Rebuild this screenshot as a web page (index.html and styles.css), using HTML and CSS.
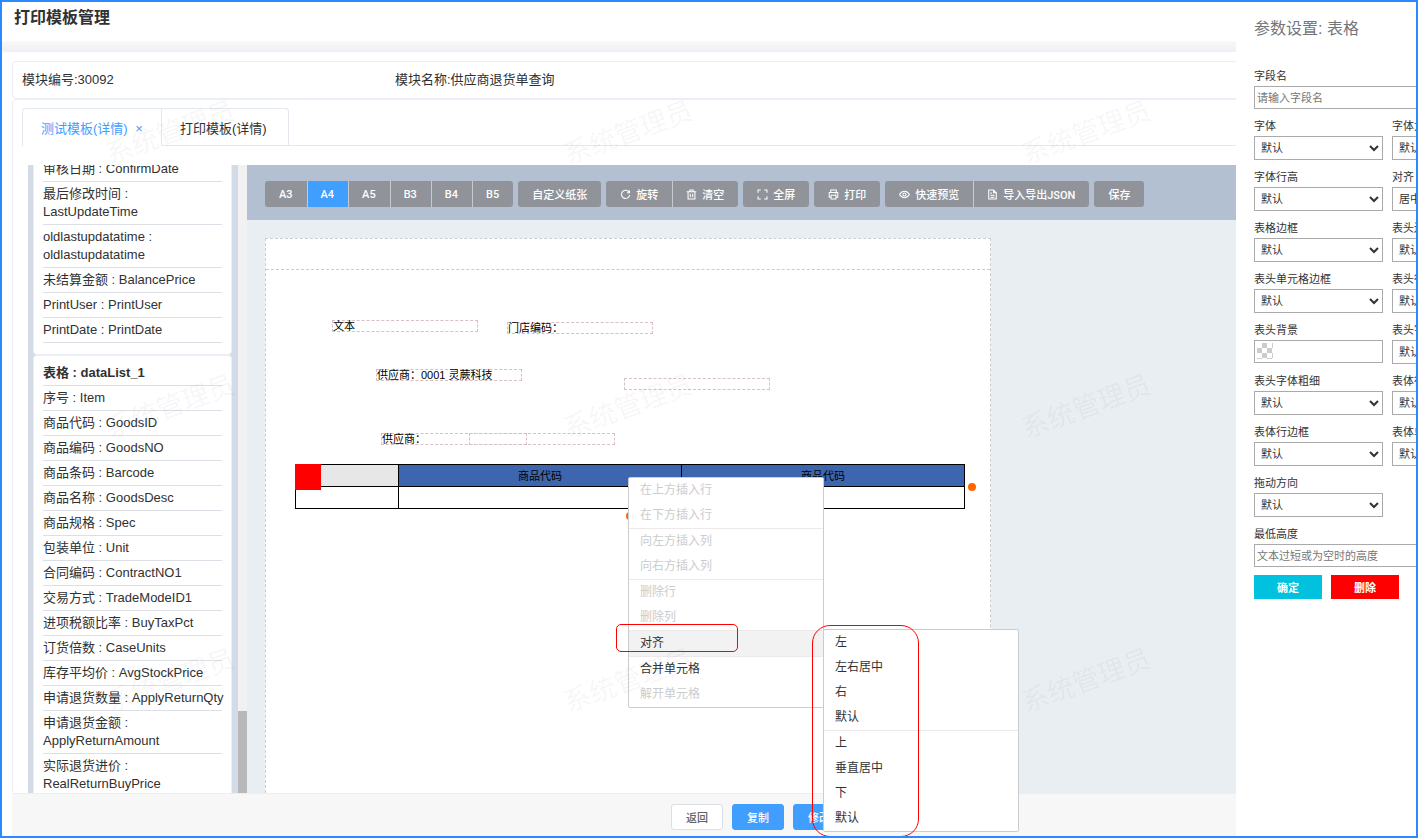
FILE: index.html
```html
<!DOCTYPE html>
<html lang="zh-CN">
<head>
    <meta charset="UTF-8">
    <meta name="viewport" content="width=device-width, initial-scale=1.0">
    <title>打印模板管理</title>
    <link rel="stylesheet" href="styles.css">
</head>
<body>

    <div class="page">
        <header class="page-header">
            <h1>打印模板管理</h1>
        </header>
        <div class="page-shadow"></div>

        <main class="card">
            <div class="info">
                <span>模块编号:30092</span>
                <span>模块名称:供应商退货单查询</span>
            </div>

            <div class="workspace">
                <nav class="tabs">
                    <button type="button" class="tab active">测试模板(详情) <span class="close">×</span></button>
                    <button type="button" class="tab">打印模板(详情)</button>
                </nav>

                <div class="designer">
                    <aside class="fields">
                        <div class="field-list">
                            <ul class="field-group">
                                <li>审核日期 : ConfirmDate</li>
                                <li>最后修改时间 :<br>LastUpdateTime</li>
                                <li>oldlastupdatatime :<br>oldlastupdatatime</li>
                                <li>未结算金额 : BalancePrice</li>
                                <li>PrintUser : PrintUser</li>
                                <li>PrintDate : PrintDate</li>
                            </ul>
                            <ul class="field-group last">
                                <li class="title">表格 : dataList_1</li>
                                <li>序号 : Item</li>
                                <li>商品代码 : GoodsID</li>
                                <li>商品编码 : GoodsNO</li>
                                <li>商品条码 : Barcode</li>
                                <li>商品名称 : GoodsDesc</li>
                                <li>商品规格 : Spec</li>
                                <li>包装单位 : Unit</li>
                                <li>合同编码 : ContractNO1</li>
                                <li>交易方式 : TradeModeID1</li>
                                <li>进项税额比率 : BuyTaxPct</li>
                                <li>订货倍数 : CaseUnits</li>
                                <li>库存平均价 : AvgStockPrice</li>
                                <li>申请退货数量 : ApplyReturnQty</li>
                                <li>申请退货金额 :<br>ApplyReturnAmount</li>
                                <li>实际退货进价 :<br>RealReturnBuyPrice</li>
                            </ul>
                        </div>
                        <div class="scrollbar"><div class="thumb"></div></div>
                    </aside>

                    <section class="editor">
                        <div class="toolbar">
                            <div class="btn-group">
                                <button type="button">A3</button>
                                <button type="button" class="active">A4</button>
                                <button type="button">A5</button>
                                <button type="button">B3</button>
                                <button type="button">B4</button>
                                <button type="button">B5</button>
                            </div>
                            <div class="btn-group">
                                <button type="button">自定义纸张</button>
                            </div>
                            <div class="btn-group">
                                <button type="button">
                                    <svg viewBox="0 0 16 16"><path d="M13.5 5.2A6 6 0 1 0 14 9M13.8 2v3.5h-3.5"/></svg>
                                    旋转
                                </button>
                                <button type="button">
                                    <svg viewBox="0 0 16 16"><path d="M1 4h14M5.5 4V1.5h5V4M3 4v10.5h10V4M6.3 7v5M9.7 7v5"/></svg>
                                    清空
                                </button>
                            </div>
                            <div class="btn-group">
                                <button type="button">
                                    <svg viewBox="0 0 16 16"><path d="M1.5 5.5v-4h4M10.5 1.5h4v4M14.5 10.5v4h-4M5.5 14.5h-4v-4"/></svg>
                                    全屏
                                </button>
                            </div>
                            <div class="btn-group">
                                <button type="button">
                                    <svg viewBox="0 0 16 16"><path d="M4 5V1.5h8V5M4 12H1.8V5h12.4v7H12M4.5 9h7v5.5h-7zM10.5 7h1.5"/></svg>
                                    打印
                                </button>
                            </div>
                            <div class="btn-group">
                                <button type="button">
                                    <svg viewBox="0 0 16 16"><path d="M.8 8C4.5 1.8 11.5 1.8 15.2 8 11.5 14.2 4.500 14.2.8 8z"/><circle cx="8" cy="8" r="2.3"/></svg>
                                    快速预览
                                </button>
                                <button type="button">
                                    <svg viewBox="0 0 16 16"><path d="M2.5 1.500h7l4 4v9h-11zM9.5 1.500v4h4M5 6h2M5 9h6M5 12h6"/></svg>
                                    导入导出JSON
                                </button>
                            </div>
                            <div class="btn-group">
                                <button type="button">保存</button>
                            </div>
                        </div>

                        <div class="canvas">
                            <div class="paper">
                                <div class="paper-head"></div>
                                <div class="item item-text">文本</div>
                                <div class="item item-store">门店编码：</div>
                                <div class="item item-supplier">供应商：0001 灵蕨科技</div>
                                <div class="item item-empty"></div>
                                <div class="item item-supplier2">供应商：</div>
                                <div class="item item-empty2"></div>

                                <div class="grid-item">
                                    <table>
                                        <colgroup><col class="col-first"><col><col></colgroup>
                                        <thead>
                                            <tr><th></th><th>商品代码</th><th>商品代码</th></tr>
                                        </thead>
                                        <tbody>
                                            <tr><td></td><td></td><td></td></tr>
                                        </tbody>
                                    </table>
                                    <span class="grip"></span>
                                    <span class="dot dot-right"></span>
                                    <span class="dot dot-bottom"></span>
                                </div>
                            </div>
                        </div>
                    </section>
                </div>
            </div>

            <footer class="actions">
                <button type="button">返回</button>
                <button type="button" class="primary">复制</button>
                <button type="button" class="primary">修改</button>
            </footer>
        </main>
    </div>

    <ul class="menu context-menu">
        <li class="disabled">在上方插入行</li>
        <li class="disabled">在下方插入行</li>
        <li class="disabled split">向左方插入列</li>
        <li class="disabled">向右方插入列</li>
        <li class="disabled split">删除行</li>
        <li class="disabled">删除列</li>
        <li class="split open">对齐
            <ul class="menu submenu">
                <li>左</li>
                <li>左右居中</li>
                <li>右</li>
                <li>默认</li>
                <li class="split">上</li>
                <li>垂直居中</li>
                <li>下</li>
                <li>默认</li>
            </ul>
        </li>
        <li class="split">合并单元格</li>
        <li class="disabled">解开单元格</li>
    </ul>

    <div class="watermark">
        <span>系统管理员</span><span>系统管理员</span><span>系统管理员</span>
        <span>系统管理员</span><span>系统管理员</span><span>系统管理员</span>
        <span>系统管理员</span><span>系统管理员</span><span>系统管理员</span>
    </div>

    <div class="mark mark-align"></div>
    <div class="mark mark-options"></div>

    <aside class="drawer">
        <h2>参数设置: 表格</h2>
        <form class="settings">
            <div class="row wide">
                <label for="fieldName">字段名</label>
                <input type="text" id="fieldName" placeholder="请输入字段名">
            </div>
            <div class="row">
                <label for="fontFamily">字体</label>
                <select id="fontFamily"><option>默认</option></select>
            </div>
            <div class="row">
                <label for="fontSize">字体大小</label>
                <select id="fontSize"><option>默认</option></select>
            </div>
            <div class="row">
                <label for="lineHeight">字体行高</label>
                <select id="lineHeight"><option>默认</option></select>
            </div>
            <div class="row">
                <label for="textAlign">对齐</label>
                <select id="textAlign"><option>居中</option></select>
            </div>
            <div class="row">
                <label for="tableBorder">表格边框</label>
                <select id="tableBorder"><option>默认</option></select>
            </div>
            <div class="row">
                <label for="headBorder">表头边框</label>
                <select id="headBorder"><option>默认</option></select>
            </div>
            <div class="row">
                <label for="headCellBorder">表头单元格边框</label>
                <select id="headCellBorder"><option>默认</option></select>
            </div>
            <div class="row">
                <label for="headRowHeight">表头行高</label>
                <select id="headRowHeight"><option>默认</option></select>
            </div>
            <div class="row">
                <label for="headBackground">表头背景</label>
                <input type="text" id="headBackground" class="color">
            </div>
            <div class="row">
                <label for="headFontSize">表头字体大小</label>
                <select id="headFontSize"><option>默认</option></select>
            </div>
            <div class="row">
                <label for="headFontWeight">表头字体粗细</label>
                <select id="headFontWeight"><option>默认</option></select>
            </div>
            <div class="row">
                <label for="bodyRowHeight">表体行高</label>
                <select id="bodyRowHeight"><option>默认</option></select>
            </div>
            <div class="row">
                <label for="bodyRowBorder">表体行边框</label>
                <select id="bodyRowBorder"><option>默认</option></select>
            </div>
            <div class="row">
                <label for="bodyCellBorder">表体单元格边框</label>
                <select id="bodyCellBorder"><option>默认</option></select>
            </div>
            <div class="row wide">
                <label for="axis">拖动方向</label>
                <select id="axis" class="half"><option>默认</option></select>
            </div>
            <div class="row wide">
                <label for="minHeight">最低高度</label>
                <input type="text" id="minHeight" placeholder="文本过短或为空时的高度">
            </div>
            <div class="buttons">
                <button type="button" class="ok">确定</button>
                <button type="button" class="delete">删除</button>
            </div>
        </form>
    </aside>

</body>
</html>
```

FILE: styles.css
```css
* {
    box-sizing: border-box;
}

body {
    position: relative;
    margin: 0;
    height: 100vh;
    border: 2px solid #2b8aff;
    overflow: hidden;
    background-color: #fff;
    color: #303133;
    font-family: "Liberation Sans", "Noto Sans CJK SC", sans-serif;
    font-size: 13px;
}

ul {
    list-style: none;
    margin: 0;
    padding: 0;
}

button,
input,
select {
    font-family: inherit;
    font-size: 11px;
    margin: 0;
}

button {
    cursor: pointer;
}

/* the page is wider than the window, its right end runs under the drawer */
.page {
    display: flex;
    flex-direction: column;
    width: calc(100% + 98px);
    height: 100%;
}

.page-header {
    padding: 4px 12px 11px;
}

.page-header h1 {
    margin: 0;
    font-size: 16px;
    line-height: 24px;
}

.page-shadow {
    height: 10px;
    background: linear-gradient(#f7f8f9, #eff1f4);
}

.card {
    display: flex;
    flex-direction: column;
    flex: 1;
    min-height: 0;
    padding: 9px 10px 0;
    border-top: 1px solid #ebeef5;
    border-radius: 4px 0 0 0;
}

.info {
    display: grid;
    grid-template-columns: repeat(4, 1fr);
    column-gap: 20px;
    padding: 8px 9px;
    border: 1px solid #ebeef5;
    border-radius: 4px;
    line-height: 20px;
}

.workspace {
    display: flex;
    flex-direction: column;
    flex: 1;
    min-height: 0;
    padding: 8px 0 0 9px;
    border: 1px solid #ebeef5;
    border-radius: 4px 4px 0 0;
}

.tabs {
    display: flex;
    border-bottom: 1px solid #e4e7ed;
}

.tab {
    height: 37px;
    min-width: 128px;
    padding: 0 18px;
    border: 1px solid #e4e7ed;
    border-bottom: none;
    border-radius: 0 4px 0 0;
    background-color: #fff;
    color: #303133;
    font-size: 13px;
    text-align: left;
}

.tab.active {
    height: 38px;
    margin-bottom: -1px;
    border-right: none;
    border-radius: 4px 0 0 0;
    color: #409eff;
}

.tab .close {
    margin-left: 4px;
}

.designer {
    display: flex;
    flex: 1;
    min-height: 0;
    margin: 19px 0 0 6px;
}

.fields {
    display: flex;
    width: 219px;
}

.field-list {
    display: flex;
    flex: 1;
    flex-direction: column;
    justify-content: flex-end;
    overflow: hidden;
    padding: 0 6px 0 5px;
    background-color: #d3dce6;
}

.field-group {
    padding: 5px 9px 11px;
    border: 1px solid #ebeef5;
    border-radius: 4px;
    background-color: #fff;
}

.field-group.last {
    margin-bottom: -4px;
    padding-bottom: 0;
    border-bottom: none;
}

.field-group li {
    padding: 3px 0;
    border-bottom: 1px solid #dcdfe6;
    line-height: 18px;
    white-space: nowrap;
}

.field-group .title {
    font-weight: bold;
}

.scrollbar {
    display: flex;
    flex-direction: column;
    justify-content: flex-end;
    width: 9px;
    background-color: #f1f1f1;
}

.thumb {
    height: 13%;
    background-color: #b8b8b8;
}

.editor {
    display: flex;
    flex: 1;
    flex-direction: column;
    min-width: 0;
}

.toolbar {
    display: flex;
    gap: 5px;
    padding: 16px 18px 13px;
    background-color: #b3c0d1;
}

.btn-group {
    display: flex;
    border-radius: 3px;
    overflow: hidden;
}

.btn-group button {
    display: flex;
    align-items: center;
    gap: 5px;
    height: 26px;
    padding: 0 14px;
    border: none;
    background-color: #909399;
    color: #fff;
    font-family: Roboto, "Noto Sans CJK SC", sans-serif;
    font-weight: 500;
    white-space: nowrap;
}

.btn-group button + button {
    box-shadow: inset 1px 0 #c8cacd;
}

.btn-group button.active {
    background-color: #409eff;
}

.btn-group svg {
    width: 11px;
    height: 11px;
    fill: none;
    stroke: #fff;
    stroke-width: 1.5;
}

.canvas {
    display: flex;
    flex: 1;
    min-height: 0;
    padding: 18px 18px 0;
    background-color: #e9eef3;
}

.paper {
    position: relative;
    width: 726px;
    border: 1px dashed #ccc;
    border-bottom: none;
    background-color: #fff;
    color: #000;
    font-size: 11px;
}

.paper-head {
    height: 31px;
    border-bottom: 1px dashed #ccc;
}

/* printed elements, placed freely on the sheet */
.item {
    position: absolute;
    width: 146px;
    height: 12px;
    border: 1px dashed #d8bfc4;
    line-height: 11px;
    white-space: nowrap;
}

.item-text {
    left: 66px;
    top: 81px;
}

.item-store {
    left: 241px;
    top: 83px;
}

.item-supplier {
    left: 110px;
    top: 130px;
}

.item-empty {
    left: 358px;
    top: 139px;
}

.item-supplier2 {
    left: 115px;
    top: 194px;
}

.item-empty2 {
    left: 203px;
    top: 194px;
}

.grid-item {
    position: absolute;
    left: 29px;
    top: 225px;
    width: 670px;
}

.grid-item table {
    width: 100%;
    table-layout: fixed;
    border-collapse: collapse;
}

.grid-item .col-first {
    width: 103px;
}

.grid-item th,
.grid-item td {
    height: 22px;
    padding: 0;
    border: 1px solid #000;
    font-weight: normal;
    line-height: 16px;
}

.grid-item th {
    background-color: #3e66ae;
}

.grid-item th:first-child {
    background-color: #e7e7e7;
}

.grip {
    position: absolute;
    left: 0;
    top: 0;
    width: 26px;
    height: 26px;
    background-color: #f00;
}

.dot {
    position: absolute;
    width: 8px;
    height: 8px;
    border-radius: 50%;
    background-color: #f60;
}

.dot-right {
    right: -11px;
    top: 19px;
}

.dot-bottom {
    left: 331px;
    bottom: -11px;
}

.actions {
    display: flex;
    justify-content: center;
    gap: 9px;
    padding: 10px 0 6px;
    background-color: #f7f7f7;
}

.actions button {
    height: 26px;
    padding: 0 14px;
    border: 1px solid #dcdfe6;
    border-radius: 3px;
    background-color: #fff;
    color: #606266;
    font-weight: 500;
}

.actions .primary {
    border-color: #409eff;
    background-color: #409eff;
    color: #fff;
}

/* context menu */
.menu {
    position: absolute;
    width: 196px;
    border: 1px solid #ccc;
    border-radius: 2px;
    background-color: #fff;
    color: #333;
    font-size: 12px;
    line-height: 25px;
}

.menu li {
    padding-left: 11px;
}

.menu .disabled {
    color: #ccc;
}

.menu .split {
    border-top: 1px solid #ede8ea;
}

.menu .open {
    position: relative;
    background-color: #f2f2f2;
}

.context-menu {
    left: 626px;
    top: 475px;
}

.submenu {
    left: 100%;
    top: -2px;
}

.watermark {
    position: absolute;
    left: -62px;
    top: -9px;
    display: grid;
    grid-template-columns: repeat(3, 458px);
    grid-auto-rows: 274px;
    place-items: center;
    color: rgba(0, 0, 0, 0.05);
    font-size: 27px;
    pointer-events: none;
}

.watermark span {
    transform: rotate(-20deg);
}

.mark {
    position: absolute;
    border: 1px solid #f00;
    pointer-events: none;
}

.mark-align {
    left: 614px;
    top: 622px;
    width: 122px;
    height: 28px;
    border-radius: 5px;
}

.mark-options {
    left: 810px;
    top: 623px;
    width: 107px;
    height: 212px;
    border-radius: 18px;
}

/* settings drawer */
.drawer {
    position: absolute;
    top: 0;
    right: -105px;
    bottom: 0;
    width: 285px;
    padding: 15px 0 0 18px;
    background-color: #fff;
}

.drawer h2 {
    margin: 0 0 25px;
    color: #72767b;
    font-size: 16px;
    font-weight: normal;
    line-height: 24px;
}

.settings {
    display: grid;
    grid-template-columns: 129px 129px;
    column-gap: 9px;
    row-gap: 7px;
    color: #333;
    font-size: 11px;
}

.row {
    display: flex;
    flex-direction: column;
}

.row.wide,
.buttons {
    grid-column: 1 / 3;
}

.row label {
    line-height: 20px;
}

.row input,
.row select {
    height: 23px;
    border: 1px solid #aaa;
    border-radius: 0;
    background-color: #fff;
    color: #333;
}

.row select {
    height: 24px;
    padding: 0 2px;
}

.row .half {
    width: 129px;
}

.row input {
    padding: 0 2px;
}

/* transparent swatch at the start of the colour box */
.row .color {
    background:
        linear-gradient(90deg, #fff 2px, transparent 2px 18px, #fff 18px),
        linear-gradient(#fff 2px, transparent 2px 18px, #fff 18px),
        conic-gradient(#ccc 25%, #fff 0 50%, #ccc 0 75%, #fff 0) 2px 2px / 10px 10px;
}

.buttons {
    display: flex;
    gap: 9px;
    padding-top: 1px;
}

.buttons button {
    width: 68px;
    height: 24px;
    border: none;
    color: #fff;
    font-weight: bold;
}

.buttons .ok {
    background-color: #00c1de;
}

.buttons .delete {
    background-color: #f00;
}
```
